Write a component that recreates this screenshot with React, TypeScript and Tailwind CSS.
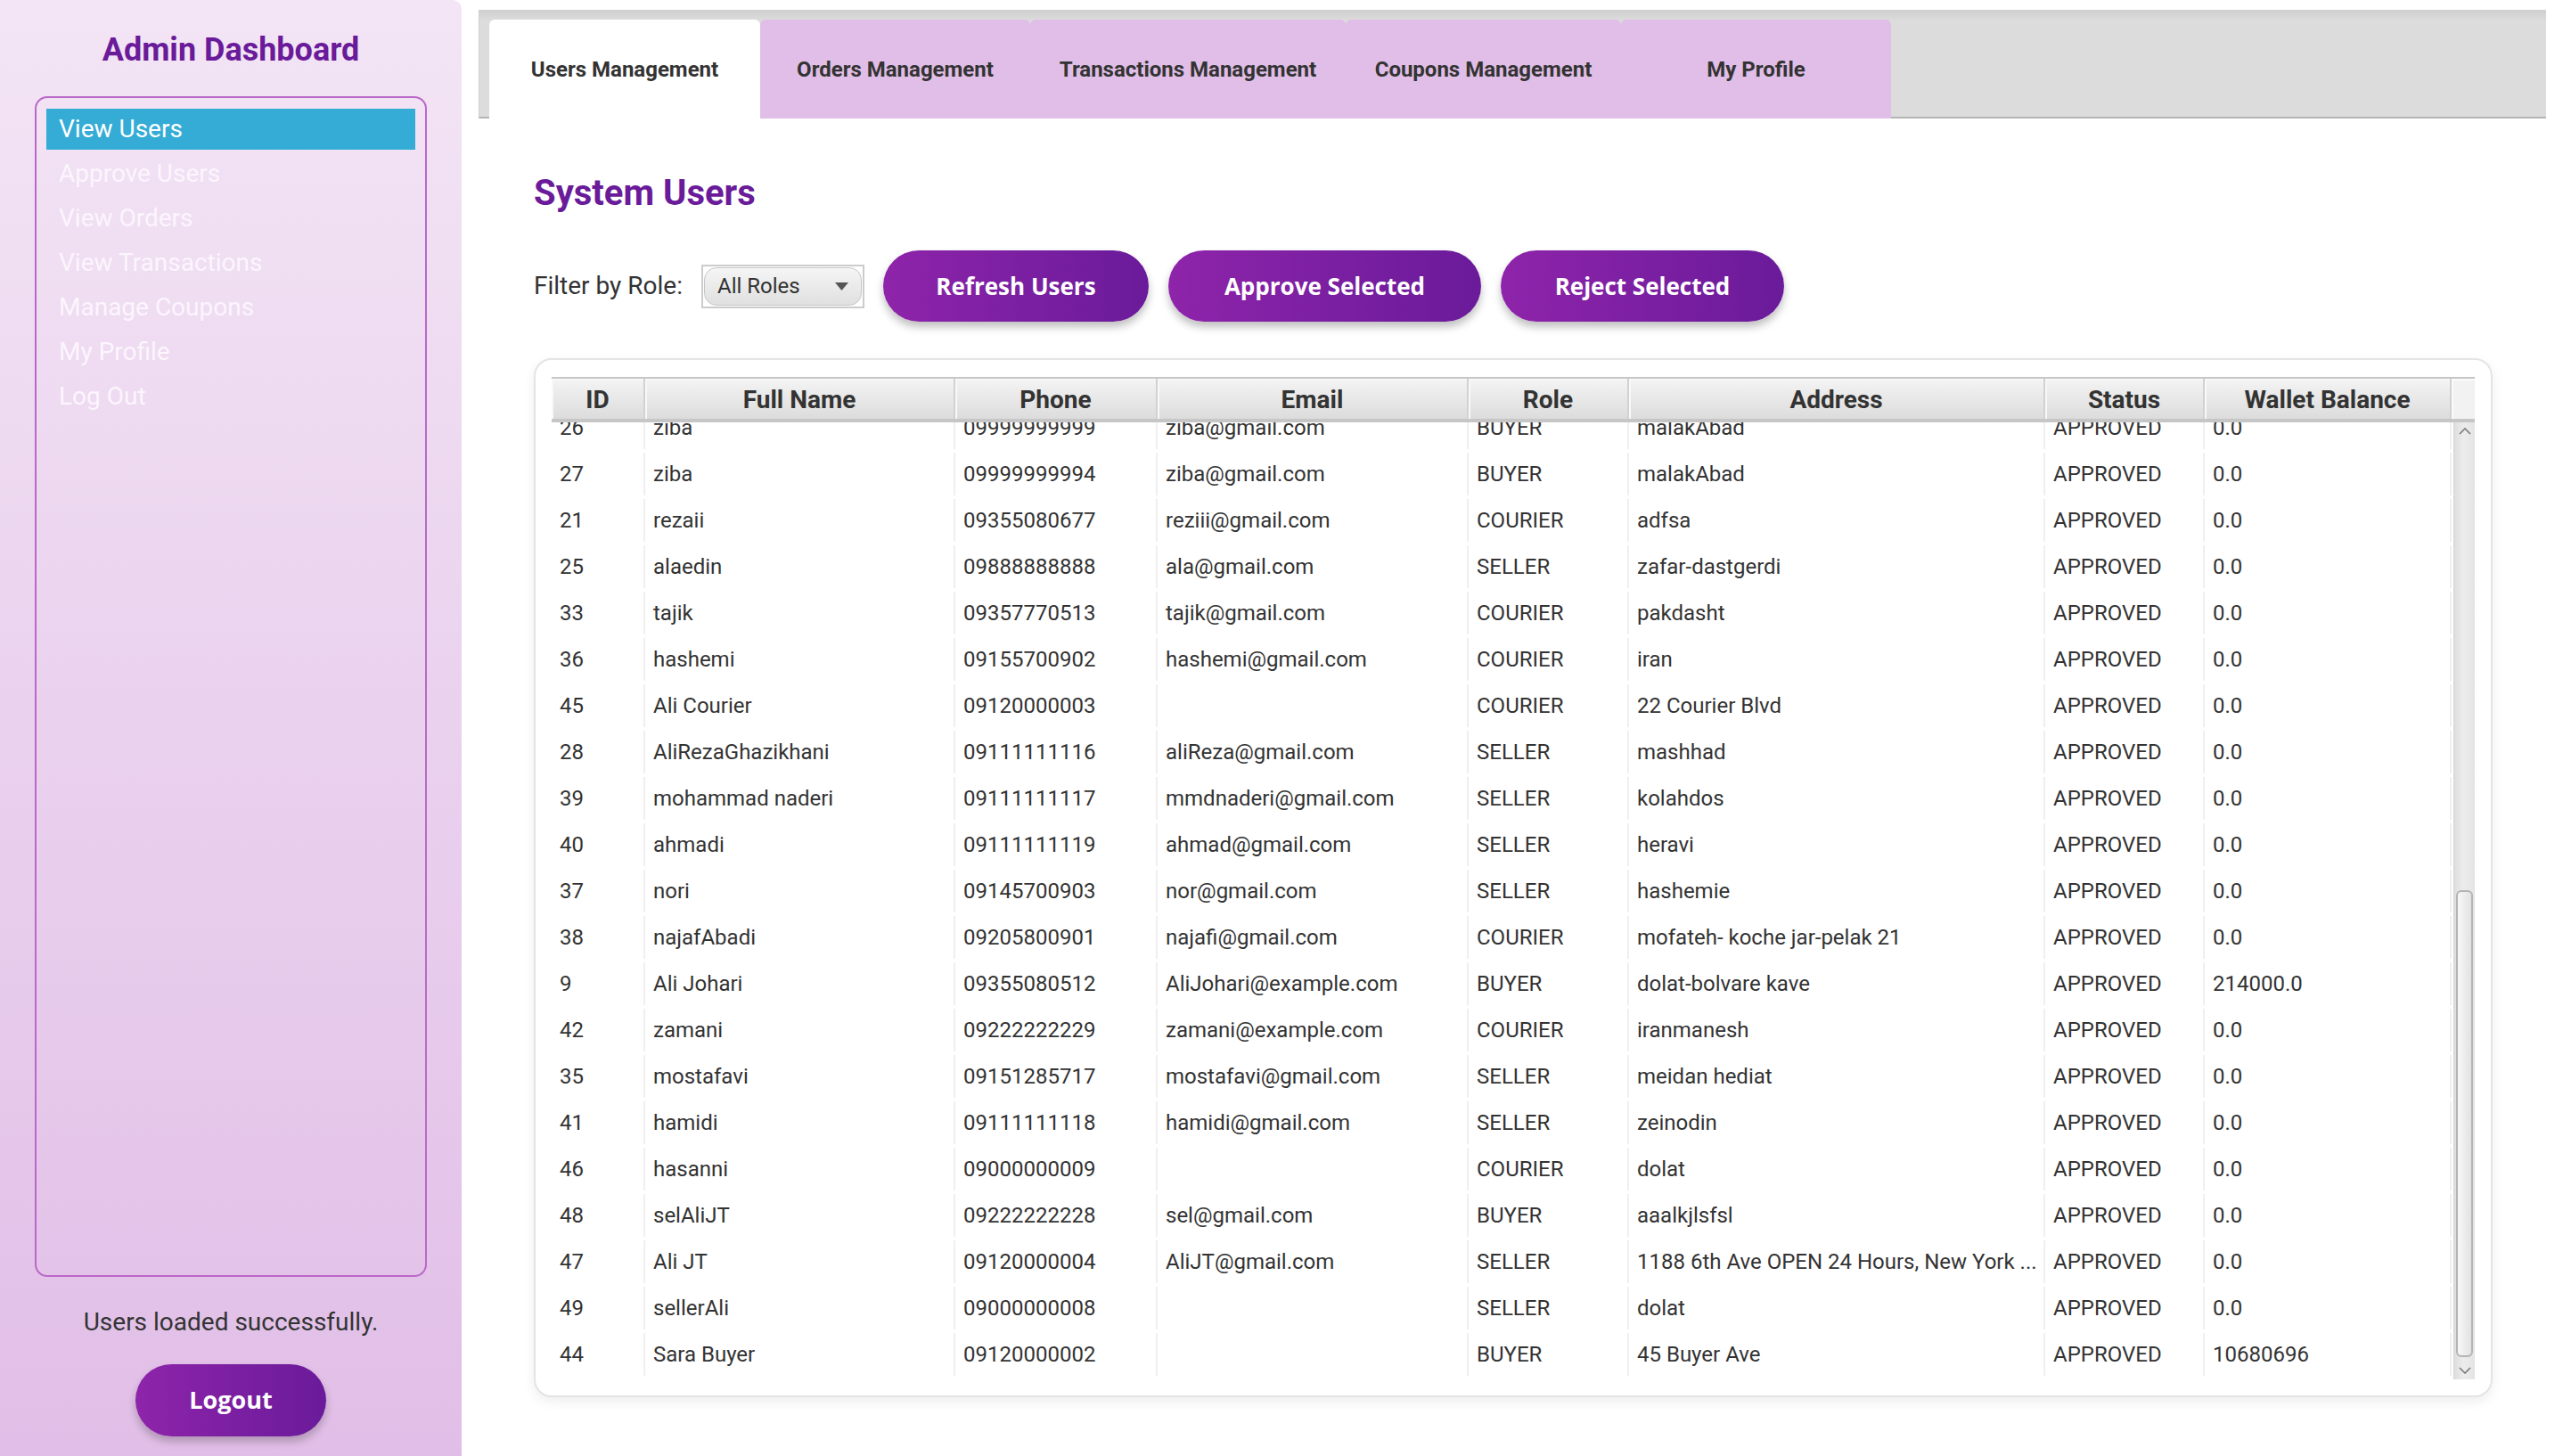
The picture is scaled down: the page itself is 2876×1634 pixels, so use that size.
import React from 'react';

type UserRow = {
  id: string;
  name: string;
  phone: string;
  email: string;
  role: string;
  address: string;
  status: string;
  wallet: string;
};

const users: UserRow[] = [
  { id: '26', name: 'ziba', phone: '09999999999', email: 'ziba@gmail.com', role: 'BUYER', address: 'malakAbad', status: 'APPROVED', wallet: '0.0' },
  { id: '27', name: 'ziba', phone: '09999999994', email: 'ziba@gmail.com', role: 'BUYER', address: 'malakAbad', status: 'APPROVED', wallet: '0.0' },
  { id: '21', name: 'rezaii', phone: '09355080677', email: 'reziii@gmail.com', role: 'COURIER', address: 'adfsa', status: 'APPROVED', wallet: '0.0' },
  { id: '25', name: 'alaedin', phone: '09888888888', email: 'ala@gmail.com', role: 'SELLER', address: 'zafar-dastgerdi', status: 'APPROVED', wallet: '0.0' },
  { id: '33', name: 'tajik', phone: '09357770513', email: 'tajik@gmail.com', role: 'COURIER', address: 'pakdasht', status: 'APPROVED', wallet: '0.0' },
  { id: '36', name: 'hashemi', phone: '09155700902', email: 'hashemi@gmail.com', role: 'COURIER', address: 'iran', status: 'APPROVED', wallet: '0.0' },
  { id: '45', name: 'Ali Courier', phone: '09120000003', email: '', role: 'COURIER', address: '22 Courier Blvd', status: 'APPROVED', wallet: '0.0' },
  { id: '28', name: 'AliRezaGhazikhani', phone: '09111111116', email: 'aliReza@gmail.com', role: 'SELLER', address: 'mashhad', status: 'APPROVED', wallet: '0.0' },
  { id: '39', name: 'mohammad naderi', phone: '09111111117', email: 'mmdnaderi@gmail.com', role: 'SELLER', address: 'kolahdos', status: 'APPROVED', wallet: '0.0' },
  { id: '40', name: 'ahmadi', phone: '09111111119', email: 'ahmad@gmail.com', role: 'SELLER', address: 'heravi', status: 'APPROVED', wallet: '0.0' },
  { id: '37', name: 'nori', phone: '09145700903', email: 'nor@gmail.com', role: 'SELLER', address: 'hashemie', status: 'APPROVED', wallet: '0.0' },
  { id: '38', name: 'najafAbadi', phone: '09205800901', email: 'najafi@gmail.com', role: 'COURIER', address: 'mofateh- koche jar-pelak 21', status: 'APPROVED', wallet: '0.0' },
  { id: '9', name: 'Ali Johari', phone: '09355080512', email: 'AliJohari@example.com', role: 'BUYER', address: 'dolat-bolvare kave', status: 'APPROVED', wallet: '214000.0' },
  { id: '42', name: 'zamani', phone: '09222222229', email: 'zamani@example.com', role: 'COURIER', address: 'iranmanesh', status: 'APPROVED', wallet: '0.0' },
  { id: '35', name: 'mostafavi', phone: '09151285717', email: 'mostafavi@gmail.com', role: 'SELLER', address: 'meidan hediat', status: 'APPROVED', wallet: '0.0' },
  { id: '41', name: 'hamidi', phone: '09111111118', email: 'hamidi@gmail.com', role: 'SELLER', address: 'zeinodin', status: 'APPROVED', wallet: '0.0' },
  { id: '46', name: 'hasanni', phone: '09000000009', email: '', role: 'COURIER', address: 'dolat', status: 'APPROVED', wallet: '0.0' },
  { id: '48', name: 'selAliJT', phone: '09222222228', email: 'sel@gmail.com', role: 'BUYER', address: 'aaalkjlsfsl', status: 'APPROVED', wallet: '0.0' },
  { id: '47', name: 'Ali JT', phone: '09120000004', email: 'AliJT@gmail.com', role: 'SELLER', address: '1188 6th Ave OPEN 24 Hours, New York ...', status: 'APPROVED', wallet: '0.0' },
  { id: '49', name: 'sellerAli', phone: '09000000008', email: '', role: 'SELLER', address: 'dolat', status: 'APPROVED', wallet: '0.0' },
  { id: '44', name: 'Sara Buyer', phone: '09120000002', email: '', role: 'BUYER', address: '45 Buyer Ave', status: 'APPROVED', wallet: '10680696' },
];

const columns: Array<{ key: keyof UserRow; label: string; width: string }> = [
  { key: 'id', label: 'ID', width: 'w-[105px]' },
  { key: 'name', label: 'Full Name', width: 'w-[348px]' },
  { key: 'phone', label: 'Phone', width: 'w-[227px]' },
  { key: 'email', label: 'Email', width: 'w-[349px]' },
  { key: 'role', label: 'Role', width: 'w-[180px]' },
  { key: 'address', label: 'Address', width: 'w-[467px]' },
  { key: 'status', label: 'Status', width: 'w-[179px]' },
  { key: 'wallet', label: 'Wallet Balance', width: 'w-[277px]' },
];

const menuItems = ['View Users', 'Approve Users', 'View Orders', 'View Transactions', 'Manage Coupons', 'My Profile', 'Log Out'];

const tabs = [
  { label: 'Users Management', width: 'w-[304px]', active: true },
  { label: 'Orders Management', width: 'w-[303px]', active: false },
  { label: 'Transactions Management', width: 'w-[354px]', active: false },
  { label: 'Coupons Management', width: 'w-[309px]', active: false },
  { label: 'My Profile', width: 'w-[303px]', active: false },
];

function Sidebar(): React.ReactElement {
  return (
    <aside className="w-[518px] h-full shrink-0 flex flex-col items-center rounded-tr-[10px] bg-[linear-gradient(to_bottom,#f3e5f5,#e1bee7)] pt-[34px] pb-[22px] px-[39px]">
      <h1 className="h-[44px] leading-[44px] text-[36px] font-bold text-[#6a1b9a]">Admin Dashboard</h1>
      <nav className="mt-[30px] w-full flex-1 rounded-[14px] border-2 border-[#ba68c8] pt-[12px] px-[11px] flex flex-col gap-[4px]">
        {menuItems.map((item, i) => (
          <div
            key={item}
            className={
              i === 0
                ? 'h-[46px] flex items-center pl-[14px] text-[28px] text-white bg-[#34acd6]'
                : 'h-[46px] flex items-center pl-[14px] text-[28px] text-[#fcf5fd]'
            }
          >
            {item}
          </div>
        ))}
      </nav>
      <p className="mt-[35px] h-[32px] leading-[32px] text-[28px] text-[#333333]">Users loaded successfully.</p>
      <button
        type="button"
        className="mt-[31px] w-[214px] h-[81px] rounded-full bg-[linear-gradient(to_right,#8e24aa,#6a1b9a)] text-white text-[27px] font-bold font-['Open_Sans',sans-serif] shadow-[0_6px_10px_rgba(0,0,0,0.22)]"
      >
        Logout
      </button>
    </aside>
  );
}

function TabBar(): React.ReactElement {
  return (
    <div className="h-[122px] flex items-end pl-[11px] border-l border-[#cfcfcf] border-b-2 border-b-[#b4b4b4] bg-[linear-gradient(to_bottom,#cfcfcf,#dcdcdc_12px,#dcdcdc)]">
      {tabs.map((tab) => (
        <div
          key={tab.label}
          className={
            (tab.active ? 'bg-white ' : 'bg-[#e1bee7] ') +
            tab.width +
            ' h-[111px] -mb-[2px] pt-[1px] rounded-t-[6px] flex items-center justify-center text-[24px] font-bold text-[#333333]'
          }
        >
          {tab.label}
        </div>
      ))}
    </div>
  );
}

function FilterRow(): React.ReactElement {
  const btn =
    'h-[80px] rounded-full bg-[linear-gradient(to_right,#8e24aa,#6a1b9a)] text-white text-[26px] font-bold font-[\'Open_Sans\',sans-serif] shadow-[0_6px_10px_rgba(0,0,0,0.25)]';
  return (
    <div className="mt-[41px] h-[80px] flex items-center">
      <span className="text-[28px] text-[#333333]">Filter by Role:</span>
      <div className="ml-[21px] w-[183px] h-[49px] border-2 border-[#cccccc] bg-white p-[1px]">
        <div className="h-full rounded-[14px] border border-[#c6c6c6] bg-[linear-gradient(to_bottom,#f5f5f5,#e0e0e0)] flex items-center pl-[14px] pr-[14px]">
          <span className="text-[24px] text-[#333333] flex-1">All Roles</span>
          <svg width="15" height="9" viewBox="0 0 15 9">
            <polygon points="0,0 15,0 7.5,9" fill="#555555" />
          </svg>
        </div>
      </div>
      <button type="button" className={btn + ' ml-[21px] w-[298px]'}>
        Refresh Users
      </button>
      <button type="button" className={btn + ' ml-[22px] w-[351px]'}>
        Approve Selected
      </button>
      <button type="button" className={btn + ' ml-[22px] w-[318px]'}>
        Reject Selected
      </button>
    </div>
  );
}

function UsersTable(): React.ReactElement {
  return (
    <div className="mt-[41px] rounded-[20px] border-2 border-[#e4e4e4] bg-white pt-[19px] px-[18px] pb-[18px] shadow-[0_5px_14px_rgba(0,0,0,0.07)]">
      <div className="flex h-[51px] border-t-2 border-b-4 border-[#c6c6c6]">
        {columns.map((col) => (
          <div
            key={col.key}
            className={
              col.width +
              ' shrink-0 flex items-center justify-center pt-[3px] border-r-2 border-[#d2d2d2] shadow-[inset_2px_2px_0_#f8f8f8] bg-[linear-gradient(to_bottom,#f4f4f4,#dcdcdc)] text-[28px] font-bold text-[#333333]'
            }
          >
            {col.label}
          </div>
        ))}
        <div className="flex-1 bg-[#f2f2f2] shadow-[inset_2px_2px_0_#fafafa]" />
      </div>
      <div className="flex h-[1074px] overflow-hidden">
        <div className="flex-1 overflow-hidden">
          <div className="-mt-[20px]">
            {users.map((u) => (
              <div key={u.id} className="flex h-[52px] py-[2px]">
                {columns.map((col) => (
                  <div
                    key={col.key}
                    className={
                      col.width +
                      ' shrink-0 flex items-center pl-[9px] border-r-2 border-[#efefef] overflow-hidden whitespace-nowrap text-[24px] text-[#333333]'
                    }
                  >
                    {u[col.key]}
                  </div>
                ))}
              </div>
            ))}
          </div>
        </div>
        <div className="w-[24px] shrink-0 flex flex-col border-l border-[#d4d4d4] bg-[linear-gradient(to_right,#dedede,#ececec_45%,#e4e4e4)]">
          <div className="h-[20px] flex items-center justify-center">
            <svg width="14" height="8" viewBox="0 0 14 8">
              <polyline points="1,7 7,1 13,7" fill="none" stroke="#7a7a7a" strokeWidth="1.6" />
            </svg>
          </div>
          <div className="h-[505px]" />
          <div className="ml-[2px] w-[19px] h-[524px] rounded-[6px] border-2 border-[#b4b4b4] bg-[linear-gradient(to_right,#f7f7f7,#e2e2e2)]" />
          <div className="flex-1" />
          <div className="h-[20px] flex items-center justify-center">
            <svg width="14" height="8" viewBox="0 0 14 8">
              <polyline points="1,1 7,7 13,1" fill="none" stroke="#7a7a7a" strokeWidth="1.6" />
            </svg>
          </div>
        </div>
      </div>
    </div>
  );
}

export default function App(): React.ReactElement {
  return (
    <div className="w-[2876px] h-[1634px] flex bg-white overflow-hidden font-['Roboto',sans-serif]">
      <Sidebar />
      <main className="flex-1 flex flex-col pt-[11px]">
        <div className="mx-[19px]">
          <TabBar />
        </div>
        <section className="pl-[81px] pr-[79px]">
          <h2 className="mt-[61px] h-[46px] leading-[46px] text-[40px] font-bold text-[#6a1b9a]">System Users</h2>
          <FilterRow />
          <UsersTable />
        </section>
      </main>
    </div>
  );
}
